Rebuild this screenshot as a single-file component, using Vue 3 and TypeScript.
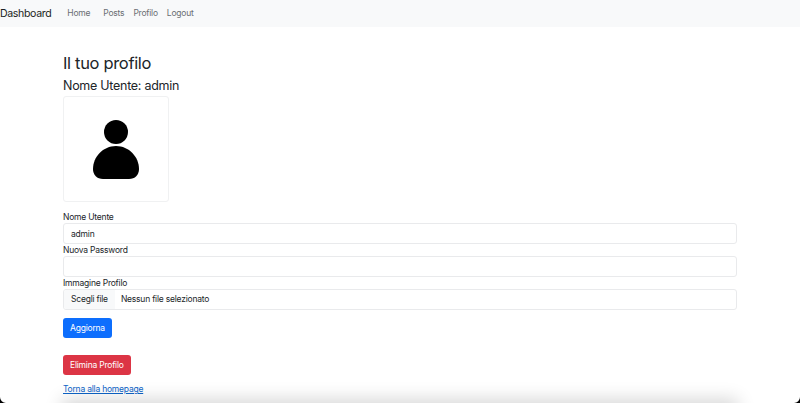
<script setup lang="ts">
const links = ['Home', 'Posts', 'Profilo', 'Logout'];
</script>

<template>
	<div class="page">
		<nav class="navbar">
			<a class="brand" href="#">Dashboard</a>
			<ul class="nav">
				<li v-for="link in links" :key="link"><a href="#">{{ link }}</a></li>
			</ul>
		</nav>
		<main class="container">
			<h1>Il tuo profilo</h1>
			<h2>Nome Utente: admin</h2>
			<div class="thumb">
				<svg width="46" height="60" viewBox="0 -1 46 60">
					<circle cx="23" cy="12" r="12" fill="#000" />
					<path d="M23 26C10 26 0 37 0 49C0 55 4 59 10 59H36C42 59 46 55 46 49C46 37 36 26 23 26Z" fill="#000" />
				</svg>
			</div>
			<form class="form" @submit.prevent>
				<label>Nome Utente</label>
				<input class="field" type="text" value="admin" />
				<label>Nuova Password</label>
				<input class="field" type="password" />
				<label>Immagine Profilo</label>
				<div class="field file">
					<span class="file-btn">Scegli file</span>
					<span class="file-name">Nessun file selezionato</span>
				</div>
				<button class="btn primary">Aggiorna</button>
				<button class="btn danger">Elimina Profilo</button>
			</form>
			<a class="back" href="#">Torna alla homepage</a>
		</main>
		<div class="shadow"></div>
		<i class="corner left"></i>
		<i class="corner right"></i>
	</div>
</template>

<style>
html, body {
	margin: 0;
	background: #fff;
	overflow: hidden;
}
</style>

<style scoped>
.page {
	position: relative;
	width: 800px;
	height: 403px;
	overflow: hidden;
	font-family: Inter, "Liberation Sans", Arial, sans-serif;
	font-size: 8.5px;
	letter-spacing: -0.025em;
	line-height: 13px;
	color: #212529;
}
.navbar {
	display: flex;
	align-items: center;
	height: 27px;
	background: #f8f9fa;
}
.brand {
	font-size: 10.6px;
	letter-spacing: -0.035em;
	color: #1c1f23;
	text-decoration: none;
	margin-right: 16px;
}
.nav {
	display: flex;
	gap: 9px;
	list-style: none;
	margin: 0;
	padding: 0;
}
.nav li:first-child {
	margin-right: 4px;
}
.nav a {
	color: #6a6e73;
	text-decoration: none;
}
.container {
	padding: 26px 63px 0;
}
h1 {
	margin: 0;
	font-size: 16.5px;
	letter-spacing: -0.02em;
	line-height: 21px;
	font-weight: 400;
}
h2 {
	margin: 3px 0 2px;
	font-size: 12.5px;
	letter-spacing: -0.022em;
	line-height: 17px;
	font-weight: 400;
}
.thumb {
	box-sizing: border-box;
	display: flex;
	align-items: center;
	justify-content: center;
	width: 106px;
	height: 106px;
	border: 1px solid #f0f1f2;
	border-radius: 3px;
}
.form {
	display: flex;
	flex-direction: column;
	align-items: flex-start;
	margin-top: 8px;
}
label {
	display: block;
	height: 13px;
	line-height: 15px;
}
.field {
	box-sizing: border-box;
	width: 674px;
	height: 21px;
	margin: 0;
	padding: 0 7px;
	border: 1px solid #e9eaec;
	border-radius: 3px;
	background: #fff;
	color: #212529;
	font: inherit;
	letter-spacing: inherit;
	outline: none;
}
.field + label {
	margin-top: -1px;
}
.file {
	display: flex;
	align-items: center;
	padding: 0;
	overflow: hidden;
}
.file-btn {
	display: flex;
	align-items: center;
	height: 100%;
	padding: 0 7px;
	background: #f8f9fa;
}
.file-name {
	padding-left: 6px;
}
.btn {
	height: 20px;
	padding: 0 7px;
	border: 0;
	border-radius: 3px;
	color: #fff;
	font: inherit;
	letter-spacing: inherit;
}
.primary {
	margin-top: 8px;
	background: #0d6efd;
}
.danger {
	margin-top: 17px;
	background: #dc3545;
}
.back {
	display: inline-block;
	margin-top: 8px;
	color: #0d64c8;
}
.shadow {
	position: absolute;
	left: 70px;
	right: 70px;
	bottom: -18px;
	height: 14px;
	box-shadow: 0 0 18px 8px rgba(0, 0, 0, 0.16);
}
.corner {
	position: absolute;
	bottom: 0;
	width: 6px;
	height: 6px;
	background: #000;
}
.corner.left {
	left: 0;
	clip-path: path('M0 0A6 6 0 0 0 6 6H0Z');
}
.corner.right {
	right: 0;
	clip-path: path('M6 0A6 6 0 0 1 0 6H6Z');
}
</style>
